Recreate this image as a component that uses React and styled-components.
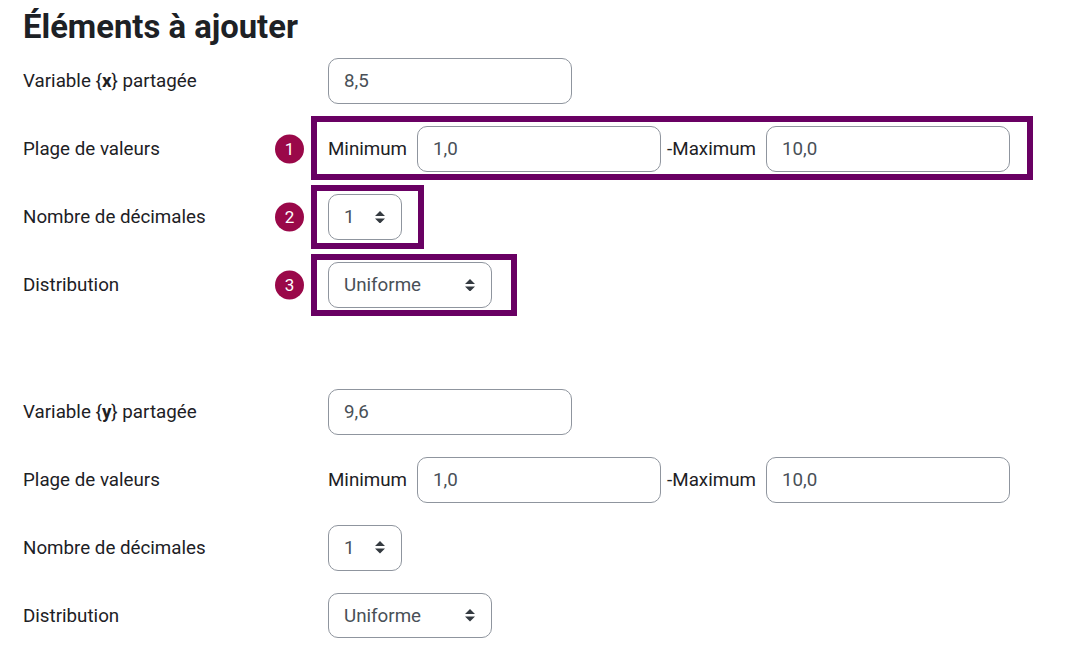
import React from 'react';
import styled, { createGlobalStyle } from 'styled-components';

const GlobalStyle = createGlobalStyle`
  body {
    margin: 0;
    background: #fff;
    font-family: Roboto, "Liberation Sans", sans-serif;
    color: #1d2125;
  }
`;

const Page = styled.div`
  padding: 8px 23px 20px;
`;

const Heading = styled.h3`
  margin: 0 0 11px;
  font-size: 32.8px;
  font-weight: 700;
  line-height: 39px;
`;

const Section = styled.div`
  display: grid;
  grid-template-columns: 305px 1fr;
  row-gap: 22.4px;
  align-items: center;

  & + & {
    margin-top: 81.4px;
  }
`;

const Label = styled.div`
  font-size: 18.75px;
  line-height: 1.5;
`;

const Field = styled.div`
  display: flex;
  align-items: center;
`;

const TextInput = styled.input`
  box-sizing: border-box;
  width: 244px;
  height: 45.6px;
  padding: 7.5px 15px;
  border: 1.25px solid #8f959e;
  border-radius: 10px;
  background: #fff;
  font-family: inherit;
  font-size: 18.75px;
  color: #495057;
  outline: none;
`;

const GroupText = styled.span`
  font-size: 18.75px;
  line-height: 1.5;
  margin: 0 10px 0 ${p => p.$gap || 0}px;
`;

const Select = styled.div`
  box-sizing: border-box;
  width: ${p => p.$width}px;
  height: 45.6px;
  padding: 0 16px 0 15px;
  border: 1.25px solid #8f959e;
  border-radius: 10px;
  background: #fff;
  display: flex;
  align-items: center;
  justify-content: space-between;
  font-size: 18.75px;
  color: #495057;
`;

const Annotated = styled.div`
  position: relative;
  display: inline-flex;
  align-items: center;

  &::before {
    content: '';
    position: absolute;
    top: -${p => p.$top}px;
    bottom: -${p => p.$bottom}px;
    left: -17px;
    right: -${p => p.$right}px;
    border: 6px solid #690063;
    pointer-events: none;
  }
`;

const Badge = styled.span`
  position: absolute;
  left: -53px;
  top: 50%;
  transform: translateY(-50%);
  width: 29px;
  height: 29px;
  border-radius: 50%;
  background: #9a0849;
  color: #fff;
  font-size: 17px;
  display: flex;
  align-items: center;
  justify-content: center;
`;

const Arrows = () => (
  <svg width="10" height="12.5" viewBox="0 0 4 5">
    <path d="M2 0L0 2h4zm0 5L0 3h4z" fill="#343a40" />
  </svg>
);

const Range = ({ min, max }) => (
  <>
    <GroupText>Minimum</GroupText>
    <TextInput defaultValue={min} />
    <GroupText $gap={6}>-Maximum</GroupText>
    <TextInput defaultValue={max} />
  </>
);

const Dropdown = ({ width, value }) => (
  <Select $width={width}>
    <span>{value}</span>
    <Arrows />
  </Select>
);

const VariableBlock = ({ name, value, annotated }) => {
  const range = <Range min="1,0" max="10,0" />;
  const decimals = <Dropdown width={74} value="1" />;
  const distribution = <Dropdown width={164} value="Uniforme" />;

  return (
    <Section>
      <Label>Variable {'{'}<b>{name}</b>{'}'} partagée</Label>
      <Field><TextInput defaultValue={value} /></Field>

      <Label>Plage de valeurs</Label>
      <Field>
        {annotated ? (
          <Annotated $top={10} $bottom={8} $right={23}>
            <Badge>1</Badge>
            {range}
          </Annotated>
        ) : range}
      </Field>

      <Label>Nombre de décimales</Label>
      <Field>
        {annotated ? (
          <Annotated $top={9} $bottom={9} $right={22}>
            <Badge>2</Badge>
            {decimals}
          </Annotated>
        ) : decimals}
      </Field>

      <Label>Distribution</Label>
      <Field>
        {annotated ? (
          <Annotated $top={8} $bottom={8} $right={25}>
            <Badge>3</Badge>
            {distribution}
          </Annotated>
        ) : distribution}
      </Field>
    </Section>
  );
};

const App = () => (
  <Page>
    <GlobalStyle />
    <Heading>Éléments à ajouter</Heading>
    <VariableBlock name="x" value="8,5" annotated />
    <VariableBlock name="y" value="9,6" />
  </Page>
);

export default App;
